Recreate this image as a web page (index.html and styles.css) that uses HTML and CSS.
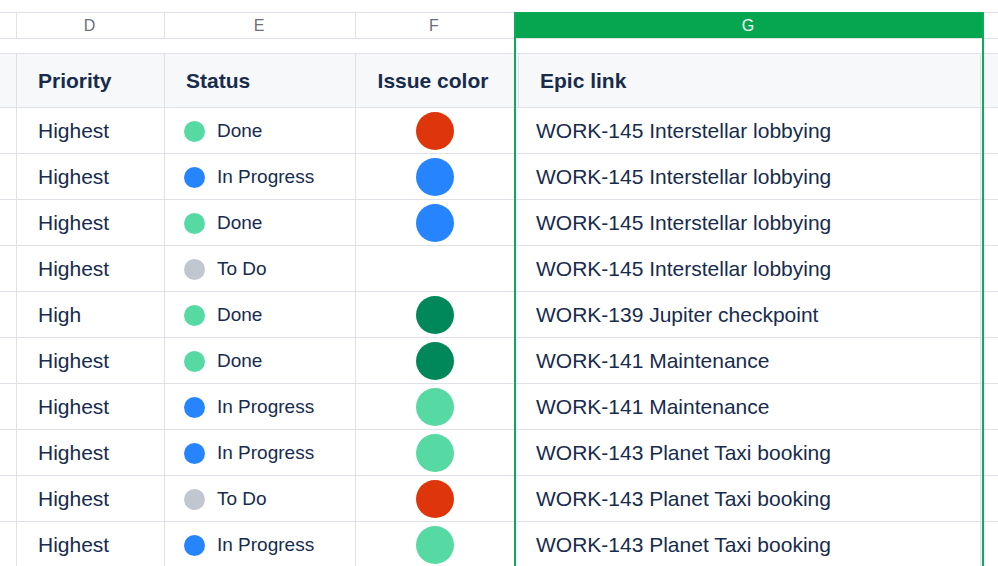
FILE: index.html
```html
<!DOCTYPE html>
<html lang="en">
<head>
<meta charset="utf-8">
<title>Sheet</title>
<link rel="stylesheet" href="styles.css">
</head>
<body>
<div class="sheet">
  <div class="row letters">
    <div class="cell"></div>
    <div class="cell letter">D</div>
    <div class="cell letter">E</div>
    <div class="cell letter">F</div>
    <div class="cell letter selected">G</div>
    <div class="cell"></div>
  </div>
  <div class="strip"></div>
  <div class="row head">
    <div class="cell"></div>
    <div class="cell">Priority</div>
    <div class="cell">Status</div>
    <div class="cell center">Issue color</div>
    <div class="cell epic-head">Epic link</div>
    <div class="cell"></div>
  </div>

  <div class="row body">
    <div class="cell"></div><div class="cell">Highest</div>
    <div class="cell status"><span class="dot done"></span>Done</div>
    <div class="cell center"><span class="swatch red"></span></div>
    <div class="cell epic">WORK-145 Interstellar lobbying</div><div class="cell"></div>
  </div>
  <div class="row body">
    <div class="cell"></div><div class="cell">Highest</div>
    <div class="cell status"><span class="dot progress"></span>In Progress</div>
    <div class="cell center"><span class="swatch blue"></span></div>
    <div class="cell epic">WORK-145 Interstellar lobbying</div><div class="cell"></div>
  </div>
  <div class="row body">
    <div class="cell"></div><div class="cell">Highest</div>
    <div class="cell status"><span class="dot done"></span>Done</div>
    <div class="cell center"><span class="swatch blue"></span></div>
    <div class="cell epic">WORK-145 Interstellar lobbying</div><div class="cell"></div>
  </div>
  <div class="row body">
    <div class="cell"></div><div class="cell">Highest</div>
    <div class="cell status"><span class="dot todo"></span>To Do</div>
    <div class="cell center"></div>
    <div class="cell epic">WORK-145 Interstellar lobbying</div><div class="cell"></div>
  </div>
  <div class="row body">
    <div class="cell"></div><div class="cell">High</div>
    <div class="cell status"><span class="dot done"></span>Done</div>
    <div class="cell center"><span class="swatch dark"></span></div>
    <div class="cell epic">WORK-139 Jupiter checkpoint</div><div class="cell"></div>
  </div>
  <div class="row body">
    <div class="cell"></div><div class="cell">Highest</div>
    <div class="cell status"><span class="dot done"></span>Done</div>
    <div class="cell center"><span class="swatch dark"></span></div>
    <div class="cell epic">WORK-141 Maintenance</div><div class="cell"></div>
  </div>
  <div class="row body">
    <div class="cell"></div><div class="cell">Highest</div>
    <div class="cell status"><span class="dot progress"></span>In Progress</div>
    <div class="cell center"><span class="swatch light"></span></div>
    <div class="cell epic">WORK-141 Maintenance</div><div class="cell"></div>
  </div>
  <div class="row body">
    <div class="cell"></div><div class="cell">Highest</div>
    <div class="cell status"><span class="dot progress"></span>In Progress</div>
    <div class="cell center"><span class="swatch light"></span></div>
    <div class="cell epic">WORK-143 Planet Taxi booking</div><div class="cell"></div>
  </div>
  <div class="row body">
    <div class="cell"></div><div class="cell">Highest</div>
    <div class="cell status"><span class="dot todo"></span>To Do</div>
    <div class="cell center"><span class="swatch red"></span></div>
    <div class="cell epic">WORK-143 Planet Taxi booking</div><div class="cell"></div>
  </div>
  <div class="row body">
    <div class="cell"></div><div class="cell">Highest</div>
    <div class="cell status"><span class="dot progress"></span>In Progress</div>
    <div class="cell center"><span class="swatch light"></span></div>
    <div class="cell epic">WORK-143 Planet Taxi booking</div><div class="cell"></div>
  </div>

  <div class="selection"></div>
</div>
</body>
</html>
```

FILE: styles.css
```css
* { box-sizing: border-box; }

html, body {
  margin: 0;
  padding: 0;
  background: #ffffff;
  overflow: hidden;
  height: 566px;
}

body {
  font-family: "Liberation Sans", Arial, Helvetica, sans-serif;
  color: #172b4d;
}

.sheet {
  position: relative;
  padding-top: 12px;
}

.row {
  display: grid;
  grid-template-columns: 17px 148px 191px 159px 469px 1fr;
}

.cell {
  border-right: 1px solid #dfe1e6;
  display: flex;
  align-items: center;
  padding-left: 21px;
  white-space: nowrap;
  overflow: hidden;
}

.row .cell:first-child { padding-left: 0; }
.row .cell:last-child { border-right: none; }

.letters {
  height: 27px;
  border-top: 1px solid #dfe1e6;
  border-bottom: 1px solid #dfe1e6;
  font-size: 16px;
  color: #6b6f7a;
}

.letter {
  justify-content: center;
  padding-left: 0;
  padding-right: 2px;
}

.letter.selected {
  background: #06a651;
  color: #ffffff;
}

.strip {
  height: 14px;
}

.head {
  height: 55px;
  border-top: 1px solid #dfe1e6;
  border-bottom: 1px solid #dfe1e6;
  background: #f7f8f9;
  font-size: 21px;
  font-weight: bold;
}

.body {
  height: 46px;
  border-bottom: 1px solid #dfe1e6;
  font-size: 21px;
}

.body .cell {
  padding-top: 1px;
}

.body .cell:first-child { padding-top: 0; }

.center {
  justify-content: center;
  padding-left: 0;
}

.head .center {
  padding-right: 4px;
}

.epic-head {
  padding-left: 25px;
  box-shadow: inset 3px 0 0 #ffffff, inset 4px 0 0 #dfe1e6,
              inset -2px 0 0 #ffffff, inset -3px 0 0 #dfe1e6;
}

.epic {
  box-shadow: inset -2px 0 0 #ffffff, inset -3px 0 0 #dfe1e6;
}

.body .status {
  padding-left: 19px;
  font-size: 19px;
}

.dot {
  width: 21px;
  height: 21px;
  border-radius: 50%;
  margin-right: 12px;
  margin-top: 1px;
  flex: none;
}

.dot.done { background: #57d9a3; }
.dot.progress { background: #2684ff; }
.dot.todo { background: #c1c7d0; }

.body .center {
  padding-top: 0;
}

.swatch {
  width: 38px;
  height: 38px;
  border-radius: 50%;
  margin-top: 1px;
  flex: none;
}

.swatch.red { background: #de350b; }
.swatch.blue { background: #2684ff; }
.swatch.dark { background: #00875a; }
.swatch.light { background: #57d9a3; }

.selection {
  position: absolute;
  left: 514px;
  top: 12px;
  width: 470px;
  height: 600px;
  border: 2px solid #0bab57;
  border-top-width: 1px;
  border-bottom: none;
  pointer-events: none;
}
```
